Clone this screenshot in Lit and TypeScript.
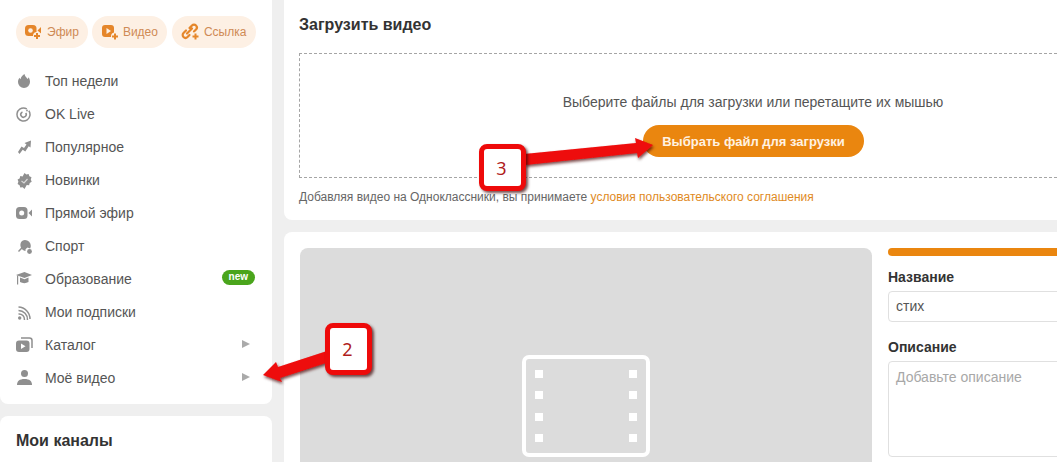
import { LitElement, html, css, svg } from "lit";
import { customElement } from "lit/decorators.js";

const G = "#8f8f8f";
const O = "#e5862a";
const plus = (x: number, y: number, bg = "#fdf0e4") => svg`<circle cx=${x} cy=${y} r="4" fill=${bg}/><path d="M${x - 1} ${y - 3}h2v2h2v2h-2v2h-2v-2h-2v-2h2z" fill=${O}/>`;
const icons: Record<string, any> = {
  efir: svg`<rect x="1" y="3" width="11.500" height="11" rx="3.500" fill=${O}/><circle cx="6.500" cy="8.500" r="2.300" fill="#fdf0e4"/><path d="M13.500 8.500l3.500-3.500v6.500z" fill=${O}/>${plus(13, 14)}`,
  video: svg`<rect x="2" y="3" width="12" height="12" rx="3" fill=${O}/><path d="M6.500 6l4.500 3-4.500 3z" fill="#fdf0e4"/>${plus(15, 14.500)}`,
  link: svg`<path d="M7 11.500l5-5M6 8.500l-2.500 2.500a2.800 2.800 0 0 0 4 4L9.500 13M9.500 6l2.500-2.500a2.800 2.800 0 0 1 4 4L14 9.500" fill="none" stroke=${O} stroke-width="2.200" stroke-linecap="round"/>${plus(15.500, 14.500, "#fdf0e4")}`,
  top: svg`<path d="M8.500 2c.3 2.500 2 3.300 3 5 .6-.5.9-1 1-1.800 1 1.300 1.500 3 1.500 4.800a6 6 0 0 1-12 0c0-1.800.5-3 1.500-4.300.2.700.5 1.100 1 1.500C5 5 6.500 3 8.500 2z" fill=${G}/>`,
  live: svg`<circle cx="7.500" cy="9.500" r="6.500" fill="none" stroke=${G} stroke-width="1.500" stroke-dasharray="37 4" transform="rotate(-35 7.500 9.500)"/><circle cx="7.500" cy="9.500" r="2.700" fill="none" stroke=${G} stroke-width="1.500" stroke-dasharray="13 4" transform="rotate(-35 7.500 9.500)"/><circle cx="11" cy="5.500" r=".9" fill=${G}/>`,
  pop: svg`<path d="M2 14l3.500-5.500 2.500 1.500 2.500-3.500L8.500 5 15 2.500l-.5 7-1.800-1.300-3.400 5.300-2.600-1.700L3.500 16z" fill=${G}/>`,
  news: svg`<path d="M8.500 2l1.800 1.500 2.300-.5.800 2.200 2.100 1-.7 2.300.9 2.200-2 1.300-.6 2.300-2.400-.2L8.500 18l-1.800-1.700-2.400.3-.7-2.300-2-1.200.8-2.300-.8-2.200 2-1.200.7-2.300 2.300.4z" fill=${G}/><path d="M5.500 10l2.500 2 3.500-4" stroke="#d8d8d8" stroke-width="1.200" fill="none"/>`,
  stream: svg`<rect x="0" y="3" width="11.500" height="12" rx="3.500" fill=${G}/><circle cx="5.700" cy="9" r="2.500" fill="#fff"/><path d="M12.500 9l3.500-3.500v7z" fill=${G}/>`,
  sport: svg`<path d="M9 3a5.800 5.800 0 0 1 5.800 6c0 1-.3 1.700-.7 2.400l-2.600-.9-2 1.800.2 1.500c-1.500.2-2.800-.5-3.800-1.800L3 15l-1-1 3-3.300C3.500 7 5 3 9 3z" fill=${G}/><circle cx="13.500" cy="14.500" r="2.400" fill=${G}/>`,
  edu: svg`<path d="M0 5l8.500-3 7.500 3-7.500 3z" fill=${G}/><path d="M4 7.500l4.500 1.800 4-1.800V12c-2.500 1.500-6 1.500-8.500 0z" fill=${G}/><rect x="1" y="5.500" width="1.200" height="9" fill=${G}/>`,
  subs: svg`<circle cx="3.700" cy="15" r="1.700" fill=${G}/><path d="M2.500 10A5.500 5.500 0 0 1 8.500 16M2.500 6.500A9 9 0 0 1 11.500 16M2.500 3A12 12 0 0 1 14 15" fill="none" stroke=${G} stroke-width="1.500" transform="translate(0 1)"/>`,
  cat: svg`<path d="M5 2h8.500a2.500 2.500 0 0 1 2.500 2.500v7.500" fill="none" stroke=${G} stroke-width="1.500"/><rect x="0" y="4.500" width="13.500" height="11.500" rx="3" fill=${G}/><path d="M5 7.500l4.500 2.700L5 13z" fill="#fff"/>`,
  my: svg`<circle cx="8.500" cy="4.500" r="3.500" fill=${G}/><path d="M1 16c0-4 2.500-6 7.500-6s7.500 2 7.500 6z" fill=${G}/>`,
};
const ic = (k: string, s = 18) => html`<svg width=${s} height=${s} viewBox="0 0 ${s} ${s}">${icons[k]}</svg>`;

const menu: [string, string, boolean?, boolean?][] = [
  ["top", "Топ недели"], ["live", "OK Live"], ["pop", "Популярное"], ["news", "Новинки"],
  ["stream", "Прямой эфир"], ["sport", "Спорт"], ["edu", "Образование", true], ["subs", "Мои подписки"],
  ["cat", "Каталог", false, true], ["my", "Моё видео", false, true],
];
const pills: [string, string][] = [["efir", "Эфир"], ["video", "Видео"], ["link", "Ссылка"]];
const holes = [370, 391, 413, 434].flatMap((y) => [535, 629].map((x) => [x - 522, y - 355]));

@customElement("app-root")
export class AppRoot extends LitElement {
  static styles = css`
    :host { display: block; position: relative; width: 1057px; height: 462px; overflow: hidden; background: #efefef;
      font-family: "Liberation Sans", Arial, sans-serif; font-size: 14px; color: #444; }
    .page { display: flex; gap: 12px; width: 1240px; }
    .side { width: 272px; flex: none; display: flex; flex-direction: column; gap: 12px; }
    .card { background: #fff; border-radius: 8px; }
    .menuCard { height: 404px; border-radius: 0 0 8px 8px; box-sizing: border-box; padding-top: 16px; }
    .pills { display: flex; gap: 4px; padding-left: 16px; margin-bottom: 16px; }
    .pill { height: 32px; border-radius: 16px; background: #fdf0e4; display: flex; align-items: center; gap: 3px; padding: 0 9px 0 8px; color: #cf8a55; font-size: 12px; }
    .pill:last-child { margin-left: 1px; gap: 4px; padding-right: 10px; }
    .row { height: 33px; display: flex; align-items: center; padding: 0 17px 0 16px; color: #555; }
    .row svg { margin-right: 11px; flex: none; }
    .row span { flex: 1; }
    .badge { flex: none; background: #4aa51c; color: #fff; font-size: 10px; font-weight: 700; height: 15px; line-height: 14px; border-radius: 8px; padding: 0 7px; margin-right: 0; margin-top: -2px; }
    .tri { width: 0; height: 0; border-left: 8px solid #aaa; border-top: 4.5px solid transparent; border-bottom: 4.5px solid transparent; margin: -2px 5px 0 0; }
    .channels { padding: 16px; height: 60px; font-weight: 700; font-size: 16px; line-height: 18px; color: #333; }
    .main { flex: 1; display: flex; flex-direction: column; gap: 12px; min-width: 0; }
    .upload { height: 220px; box-sizing: border-box; padding: 16px 16px 0 15px; border-radius: 0 0 8px 8px; }
    h2 { margin: 0 0 19px; font-size: 16px; line-height: 18px; font-weight: 700; color: #333; }
    .drop { height: 125px; width: 908px; box-sizing: border-box; border: 1px dashed #a5a5a5; display: flex; flex-direction: column; align-items: center; padding-top: 40px; gap: 15px; color: #555; font-size: 14px; }
    .drop p { margin: 0; line-height: 16px; }
    .btn { width: 221px; height: 32px; border-radius: 16px; background: #ea860f; color: #fff2e2; font-weight: 700; font-size: 13px; display: flex; align-items: center; justify-content: center; padding-left: 1px; box-sizing: border-box; }
    .terms { margin-top: 12px; font-size: 12px; color: #666; line-height: 15px; }
    .terms a { color: #e08a1e; }
    .edit { display: flex; gap: 16px; padding: 16px; height: 400px; }
    .preview { width: 572px; flex: none; height: 400px; background: #dcdcdc; border-radius: 8px; display: flex; justify-content: center; padding-top: 107px; box-sizing: border-box; }
    .film { width: 128px; height: 102px; border: 4px solid #fff; border-radius: 7px; box-sizing: border-box; position: relative; }
    .hole { position: absolute; width: 8px; height: 8px; background: #fff; }
    .form { flex: 1; display: flex; flex-direction: column; }
    .bar { height: 8px; background: #ea860f; border-radius: 4px; margin-bottom: 13px; }
    label { font-weight: 700; font-size: 14px; line-height: 16px; color: #333; margin-bottom: 6px; }
    .input { height: 31px; box-sizing: border-box; border: 1px solid #e0e0e0; border-radius: 4px; padding: 0 7px; line-height: 29px; color: #555; margin-bottom: 17px; font-size: 14px; }
    .area { height: 96px; box-sizing: border-box; border: 1px solid #e0e0e0; border-radius: 4px; padding: 7px; color: #a8a8a8; line-height: 16px; }
    .over { position: absolute; left: 0; top: 0; pointer-events: none; }
    .note { position: absolute; box-sizing: border-box; background: #fff; border: 5px solid #ee0a0a; border-radius: 8px; box-shadow: 2px 2px 3px rgba(60,0,0,.7); color: #b01c1c; font-size: 18px; display: flex; align-items: center; justify-content: center; font-family: "Noto Sans", sans-serif; padding-right: 2px; }
    .n2 { left: 325px; top: 323px; width: 47px; height: 52px; }
    .n3 { left: 479px; top: 144px; width: 47px; height: 47px; }
  `;

  render() {
    return html`
      <div class="page">
        <div class="side">
          <div class="card menuCard">
            <div class="pills">${pills.map(([k, t]) => html`<div class="pill">${ic(k, 20)}${t}</div>`)}</div>
            ${menu.map(([k, t, b, a]) => html`<div class="row">${ic(k)}<span>${t}</span>${b ? html`<div class="badge">new</div>` : ""}${a ? html`<div class="tri"></div>` : ""}</div>`)}
          </div>
          <div class="card channels">Мои каналы</div>
        </div>
        <div class="main">
          <div class="card upload">
            <h2>Загрузить видео</h2>
            <div class="drop"><p>Выберите файлы для загрузки или перетащите их мышью</p><div class="btn">Выбрать файл для загрузки</div></div>
            <div class="terms">Добавляя видео на Одноклассники, вы принимаете <a>условия пользовательского соглашения</a></div>
          </div>
          <div class="card edit">
            <div class="preview"><div class="film">${holes.map(([x, y]) => html`<div class="hole" style="left:${x - 4}px;top:${y - 4}px"></div>`)}</div></div>
            <div class="form">
              <div class="bar"></div>
              <label>Название</label><div class="input">стих</div>
              <label>Описание</label><div class="area">Добавьте описание</div>
            </div>
          </div>
        </div>
      </div>
      <svg class="over" width="1057" height="462">
        <defs><filter id="s" x="-10%" y="-20%" width="120%" height="150%"><feDropShadow dx="1" dy="2" stdDeviation="1.500" flood-color="#400" flood-opacity=".7"/></filter></defs>
        <path filter="url(#s)" fill="#ee0a0a" d="M263 375L276 362L278 367L327 351L329 362L280 378L282 382Z"/>
        <path filter="url(#s)" fill="#ee0a0a" d="M653 145L635 138L636 143L524 154L525 165L637 153L638 158Z"/>
      </svg>
      <div class="note n2">2</div>
      <div class="note n3">3</div>
    `;
  }
}
